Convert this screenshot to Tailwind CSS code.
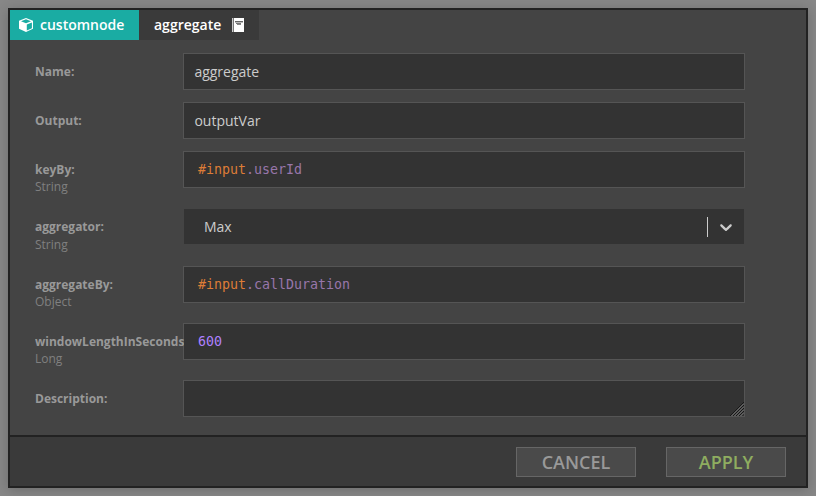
<!DOCTYPE html>
<html lang="en">
<head>
<meta charset="utf-8">
<title>Node details</title>
<script src="https://cdn.jsdelivr.net/npm/@tailwindcss/browser@4"></script>
</head>
<body class="h-[496px] w-[816px] overflow-hidden bg-[#878787] p-2 font-['Open_Sans',sans-serif]">
<div class="flex h-[480px] w-[800px] flex-col border-2 border-[#222] bg-[#444] shadow-[0_2px_12px_rgba(0,0,0,0.2)]">
  <header class="flex h-[30px] text-sm font-semibold text-white">
    <div class="flex w-[129px] items-center bg-[#1aaca3] pl-[9px]">
      <svg class="mr-[7px] h-[14px] w-[14px]" viewBox="0 0 14 14"><path fill="#fff" d="M7 0 14 2.8V10.8L7 14 0 10.8V2.8Z"/><path fill="#1aaca3" d="M7 1.3 12 3.3 7 5.3 2 3.3ZM7.8 6.6 12.9 4.5V10.2L7.8 12.6Z"/></svg>
      <span>customnode</span>
    </div>
    <div class="flex w-[120px] items-center bg-[#3a3a3a] pl-[15px]">
      <span class="w-[78px]">aggregate</span>
      <svg class="h-[14px] w-[12px]" viewBox="0 0 12 14" shape-rendering="crispEdges"><path fill="#fff" d="M2 0H12V14H2Z"/><path fill="#ccc" d="M0 0H1V14H0Z"/><path fill="#777" d="M1 0H2V14H1Z"/><path fill="#666" d="M3 3H11V4H3Z"/><path fill="#bbb" d="M3 4H11V5H3Z"/><path fill="#777" d="M4 5H9V6H4Z"/><path fill="#888" d="M5 6H9V7H5Z"/></svg>
    </div>
  </header>
  <main class="flex flex-1 flex-col pt-[13px] pl-[25px] text-xs text-[#999]">
    <div class="flex h-[49px]"><div class="w-[148px] pt-[10px] font-bold leading-[17px]">Name:</div><div class="h-[37px] w-[562px] border border-[#555] bg-[#333] pl-[10.4px] text-sm leading-[35px] text-[#ccc]">aggregate</div></div>
    <div class="flex h-[49px]"><div class="w-[148px] pt-[10px] font-bold leading-[17px]">Output:</div><div class="h-[37px] w-[562px] border border-[#555] bg-[#333] pl-[10.4px] text-sm leading-[35px] text-[#ccc]">outputVar</div></div>
    <div class="flex h-[58px]"><div class="w-[148px] pt-[10px] leading-[17px]"><div class="font-bold">keyBy:</div><div class="text-[#808080]">String</div></div><div class="h-[37px] w-[562px] border border-[#555] bg-[#333] pl-[14px] font-['DejaVu_Sans_Mono',monospace] text-[13.3px] leading-[35px] text-[#9876aa]"><span class="text-[#dd7c37]">#input</span>.userId</div></div>
    <div class="flex h-[57px]"><div class="w-[149px] pt-[9px] leading-[18px]"><div class="font-bold">aggregator:</div><div class="text-[#808080]">String</div></div><div class="flex h-[35px] w-[560px] items-center bg-[#333] pl-5 text-sm text-[#ccc]"><span class="w-[503px]">Max</span><span class="h-5 w-px bg-[#ccc]"></span><svg class="ml-[8px] h-5 w-5" viewBox="0 0 20 20" fill="#ccc"><path d="M4.516 7.548c.436-.446 1.043-.481 1.576 0L10 11.295l3.908-3.747c.533-.481 1.141-.446 1.574 0 .436.445.408 1.197 0 1.615-.406.418-4.695 4.502-4.695 4.502-.217.223-.502.335-.787.335s-.57-.112-.789-.335c0 0-4.287-4.084-4.695-4.502s-.436-1.17 0-1.615z"/></svg></div></div>
    <div class="flex h-[57px]"><div class="w-[148px] pt-[10px] leading-[17px]"><div class="font-bold">aggregateBy:</div><div class="text-[#808080]">Object</div></div><div class="h-[37px] w-[562px] border border-[#555] bg-[#333] pl-[14px] font-['DejaVu_Sans_Mono',monospace] text-[13.3px] leading-[35px] text-[#9876aa]"><span class="text-[#dd7c37]">#input</span>.callDuration</div></div>
    <div class="flex h-[57px]"><div class="z-10 -mr-px w-[149px] overflow-hidden pt-[10px] leading-[17px]"><div class="font-bold">windowLengthInSeconds:</div><div class="text-[#808080]">Long</div></div><div class="h-[37px] w-[562px] border border-[#555] bg-[#333] pl-[14px] font-['DejaVu_Sans_Mono',monospace] text-[13.3px] leading-[35px] text-[#ae81ff]">600</div></div>
    <div class="flex h-[37px]"><div class="w-[148px] pt-[10px] font-bold leading-[17px]">Description:</div><div class="flex h-[37px] w-[562px] items-end justify-end border border-[#555] bg-[#333]"><svg class="h-[14px] w-[14px]" viewBox="0 0 14 14" fill="none"><path stroke="#171717" d="M0 14 14 0M3 14 14 3M6 14 14 6M9 14 14 9"/><path stroke="#858585" d="M1.5 14 14 1.5M4.5 14 14 4.5M7.5 14 14 7.5M10.5 14 14 10.5"/></svg></div></div>
  </main>
  <footer class="flex h-[51px] shrink-0 justify-end gap-[30px] border-t-2 border-[#222] bg-[#3a3a3a] pt-[10px] pr-5 text-lg font-semibold">
    <button class="h-[30px] w-[120px] border border-[#666] bg-[#4a4a4a] leading-[28px] text-[#999]">CANCEL</button>
    <button class="h-[30px] w-[120px] border border-[#666] bg-[#4a4a4a] leading-[28px] text-[#8fad60]">APPLY</button>
  </footer>
</div>
</body>
</html>
